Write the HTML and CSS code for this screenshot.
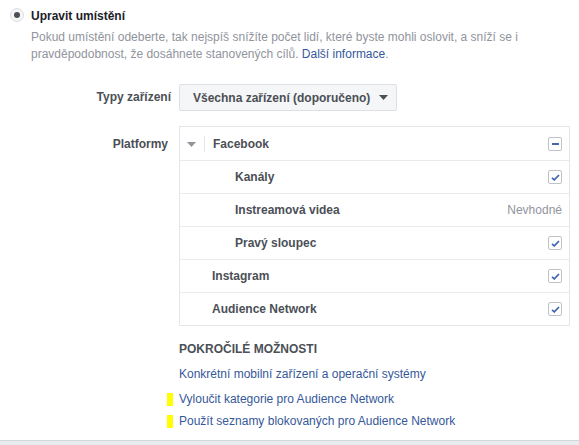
FILE: index.html
```html
<!DOCTYPE html>
<html lang="cs">
<head>
<meta charset="utf-8">
<link rel="stylesheet" href="styles.css">
</head>
<body>
<div class="panel">
  <div class="title-row">
    <span class="radio"><span class="radio-dot"></span></span>
    <span class="title">Upravit umístění</span>
  </div>
  <p class="desc">Pokud umístění odeberte, tak nejspíš snížíte počet lidí, které byste mohli oslovit, a sníží se i pravděpodobnost, že dosáhnete stanovených cílů. <a class="link" href="#">Další informace</a>.</p>

  <div class="form-row">
    <div class="label label-select">Typy zařízení</div>
    <div class="control">
      <button class="select">Všechna zařízení (doporučeno)
        <svg class="caret" width="9" height="5" viewBox="0 0 9 5"><path d="M0 0h9L4.5 5z" fill="#4b4f56"/></svg>
      </button>
    </div>
  </div>

  <div class="form-row platforms-row">
    <div class="label label-table">Platformy</div>
    <div class="control">
      <div class="table">
        <div class="row row-first">
          <svg class="tcaret" width="9" height="5" viewBox="0 0 9 5"><path d="M0 0h9L4.5 5z" fill="#90949c"/></svg>
          <span class="sep"></span>
          <span class="name">Facebook</span>
          <span class="cb"><span class="minus"></span></span>
        </div>
        <div class="row indent2">
          <span class="name">Kanály</span>
          <span class="cb"><svg width="9" height="7" viewBox="0 0 9 7"><path d="M1 3.8l2.3 2.1L8 1" fill="none" stroke="#4267b2" stroke-width="1.7"/></svg></span>
        </div>
        <div class="row indent2">
          <span class="name">Instreamová videa</span>
          <span class="na">Nevhodné</span>
        </div>
        <div class="row indent2">
          <span class="name">Pravý sloupec</span>
          <span class="cb"><svg width="9" height="7" viewBox="0 0 9 7"><path d="M1 3.8l2.3 2.1L8 1" fill="none" stroke="#4267b2" stroke-width="1.7"/></svg></span>
        </div>
        <div class="row indent1">
          <span class="name">Instagram</span>
          <span class="cb"><svg width="9" height="7" viewBox="0 0 9 7"><path d="M1 3.8l2.3 2.1L8 1" fill="none" stroke="#4267b2" stroke-width="1.7"/></svg></span>
        </div>
        <div class="row indent1 row-last">
          <span class="name">Audience Network</span>
          <span class="cb"><svg width="9" height="7" viewBox="0 0 9 7"><path d="M1 3.8l2.3 2.1L8 1" fill="none" stroke="#4267b2" stroke-width="1.7"/></svg></span>
        </div>
      </div>
    </div>
  </div>

  <div class="advanced">
    <div class="adv-title">POKROČILÉ MOŽNOSTI</div>
    <div class="adv-link first"><a class="link" href="#">Konkrétní mobilní zařízení a operační systémy</a></div>
    <div class="adv-link marked"><span class="marker"></span><a class="link" href="#">Vyloučit kategorie pro Audience Network</a></div>
    <div class="adv-link marked tight"><span class="marker"></span><a class="link" href="#">Použít seznamy blokovaných pro Audience Network</a></div>
  </div>
</div>
<div class="footer"></div>
</body>
</html>
```
FILE: styles.css
```css
html, body {
  margin: 0;
  padding: 0;
  background: #e9ebee;
}
body {
  font-family: "Liberation Sans", Arial, Helvetica, sans-serif;
  font-size: 12px;
  color: #4b4f56;
}
.panel {
  background: #fff;
  height: 441px;
  border-bottom: 1px solid #d3d6db;
  box-sizing: border-box;
  padding-top: 7px;
  overflow: hidden;
}
.title-row {
  display: flex;
  align-items: center;
  height: 16px;
  padding-left: 10px;
}
.radio {
  width: 12px;
  height: 12px;
  border: 1px solid #dddfe2;
  border-radius: 50%;
  background: #f5f6f7;
  display: flex;
  align-items: center;
  justify-content: center;
  margin-right: 7px;
}
.radio-dot {
  width: 6px;
  height: 6px;
  border-radius: 50%;
  background: #4b4f56;
}
.title {
  font-weight: bold;
  color: #1d2129;
  line-height: 16px;
  padding-top: 1px;
}
.desc {
  margin: 6px 0 0 31px;
  width: 510px;
  color: #90949c;
  line-height: 17px;
}
.link {
  color: #365899;
  text-decoration: none;
}
.form-row {
  display: flex;
  align-items: flex-start;
  margin-top: 21px;
}
.platforms-row {
  margin-top: 15px;
}
.label {
  width: 171px;
  text-align: right;
  font-weight: bold;
  color: #4b4f56;
  box-sizing: border-box;
}
.label-select {
  padding-top: 6px;
  line-height: 14px;
}
.label-table {
  padding-top: 10px;
  padding-right: 3px;
  line-height: 16px;
}
.control {
  margin-left: 8px;
}
.select {
  display: flex;
  align-items: center;
  height: 27px;
  width: 218px;
  box-sizing: border-box;
  padding: 0 0 0 13px;
  background: #f5f6f7;
  border: 1px solid #dddfe2;
  border-radius: 2px;
  font-family: inherit;
  font-size: 12px;
  font-weight: bold;
  color: #4b4f56;
}
.caret {
  margin-left: 9px;
}
.table {
  width: 391px;
  box-sizing: border-box;
  border: 1px solid #e5e6e9;
}
.row {
  display: flex;
  align-items: center;
  height: 33px;
  box-sizing: border-box;
  border-bottom: 1px solid #e9ebee;
  padding-right: 7px;
  font-weight: bold;
  color: #4b4f56;
}
.row-first {
  height: 34px;
  padding-left: 7px;
}
.row-last {
  border-bottom: none;
  height: 32px;
}
.indent1 { padding-left: 32px; }
.indent2 { padding-left: 55px; }
.tcaret {
  margin-top: 1px;
}
.sep {
  width: 1px;
  height: 16px;
  background: #e5e6e9;
  margin: 0 8px 0 8px;
}
.name {
  flex: 1;
}
.cb {
  width: 14px;
  height: 14px;
  box-sizing: border-box;
  border: 1px solid #bec3c9;
  border-radius: 2px;
  background: #fff;
  display: flex;
  align-items: center;
  justify-content: center;
}
.minus {
  width: 7px;
  height: 2px;
  background: #4267b2;
}
.na {
  font-weight: normal;
  color: #90949c;
}
.advanced {
  margin: 16px 0 0 179px;
}
.adv-title {
  font-weight: bold;
  color: #4b4f56;
  line-height: 14px;
}
.adv-link {
  display: flex;
  align-items: center;
  line-height: 14px;
  margin-top: 11px;
}
.adv-link.marked {
  margin-left: -12px;
  margin-top: 11px;
}
.adv-link.tight {
  margin-top: 8px;
}
.marker {
  width: 6px;
  height: 13px;
  background: #ffff00;
  margin-right: 6px;
}
.footer {
  height: 4px;
  background: #e9ebee;
}
```
